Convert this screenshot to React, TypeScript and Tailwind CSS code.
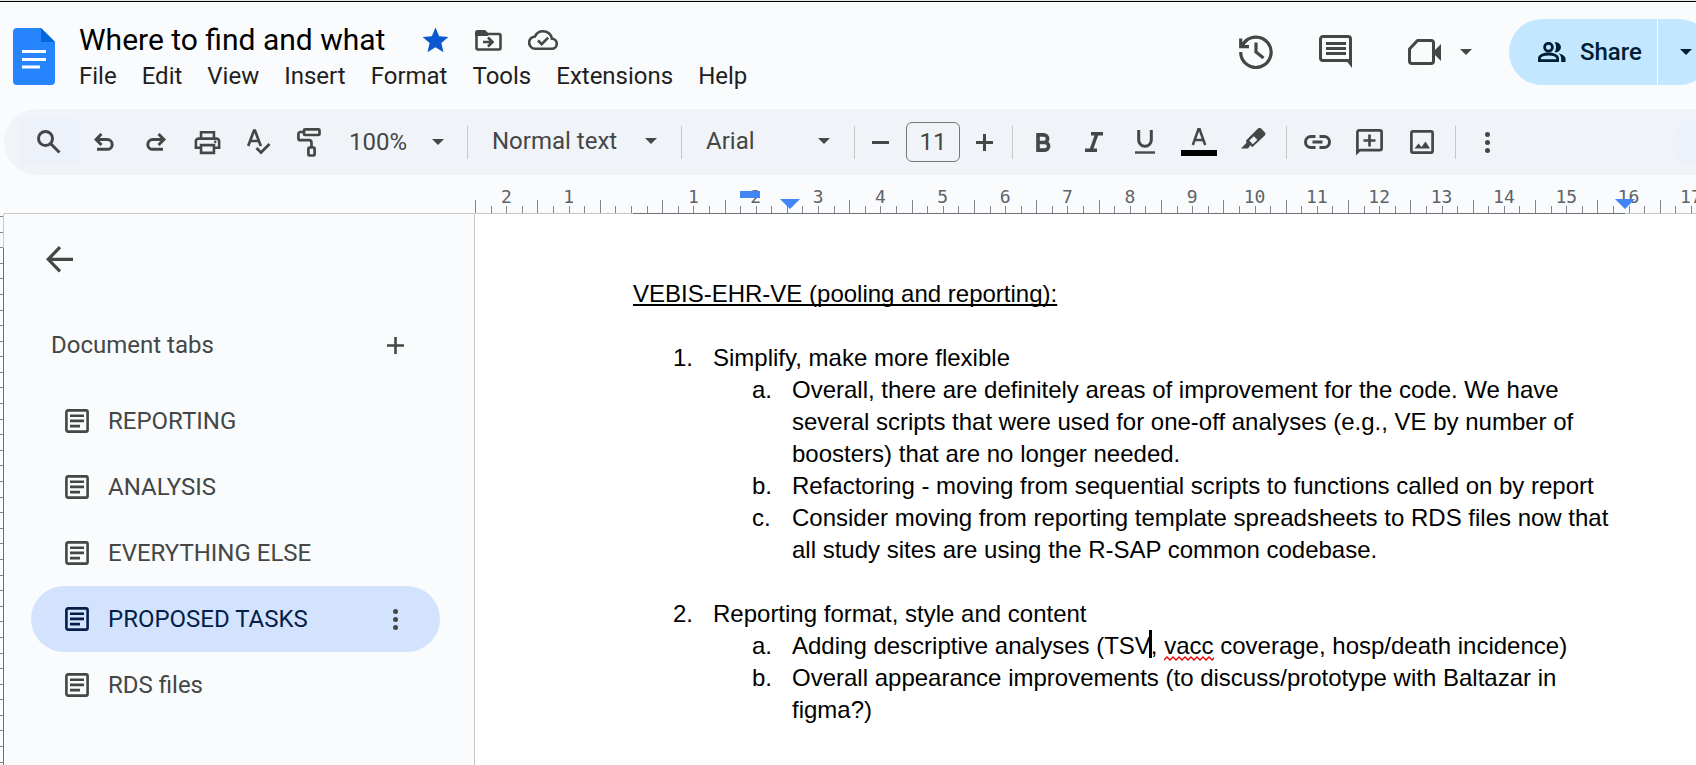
import React from 'react';
import { MdStar, MdOutlinePrint } from 'react-icons/md';

type IconProps = { w: number; h: number; sw?: number; className?: string; children: React.ReactNode };

function Icon({ w, h, sw = 3, className = '', children }: IconProps) {
  return (
    <svg
      width={w}
      height={h}
      viewBox={`0 0 ${w} ${h}`}
      fill="none"
      stroke="currentColor"
      strokeWidth={sw}
      className={`shrink-0 ${className}`}
      aria-hidden="true"
    >
      {children}
    </svg>
  );
}

const Caret = () => (
  <Icon w={12} h={6}>
    <path d="M0 0h12L6 6z" fill="currentColor" stroke="none" />
  </Icon>
);

const DocsLogo = () => (
  <svg width="42" height="57" viewBox="0 0 42 57" className="shrink-0" aria-hidden="true">
    <path d="M4 0h24l14 14v39a4 4 0 0 1-4 4H4a4 4 0 0 1-4-4V4a4 4 0 0 1 4-4z" fill="#2684fc" />
    <path d="M28 0l14 14H28z" fill="#0066da" />
    <path d="M9 22h24v3H9zM9 30h24v3H9zM9 37.500h18v3H9z" fill="#fff" />
  </svg>
);

const FolderMove = () => (
  <Icon w={27} h={21} sw={2.6}>
    <path d="M1.500 3v15a1.500 1.500 0 0 0 1.500 1.500h21a1.500 1.500 0 0 0 1.500-1.500V5.500A1.500 1.500 0 0 0 24 4H13" />
    <path d="M0 6V2.500A2.500 2.500 0 0 1 2.500 0H10l3 2.700V6z" fill="currentColor" stroke="none" />
    <path d="M8 12h9M13 7.500l4.500 4.500-4.500 4.500" />
  </Icon>
);

const CloudDone = () => (
  <Icon w={30} h={20} sw={2.6}>
    <path d="M7.500 18.700h16a5 5 0 0 0 .5-10C23.300 4.300 19.500 1.300 15 1.300c-3.600 0-6.600 2-8 5.200a6.100 6.100 0 0 0 .5 12.200z" />
    <path d="M10 10.500l3.700 3.700 6.500-6.500" />
  </Icon>
);

const History = () => (
  <Icon w={34} h={34} sw={3.2}>
    <path d="M1.700 17A15.200 15.200 0 1 0 4 9.200M1.700 3.500v8.200H10M17 7.500V17l7.500 6" />
    <path d="M3 11.500A15.200 15.200 0 0 1 8 4.700" />
  </Icon>
);

const Comment = () => (
  <Icon w={34} h={34}>
    <path d="M31.500 29V4a2.500 2.500 0 0 0-2.500-2.500H4A2.500 2.500 0 0 0 1.500 4v19A2.500 2.500 0 0 0 4 25.500h24" />
    <path d="M26 24h7v9z" fill="currentColor" stroke="none" />
    <path d="M7 8.500h20M7 13.500h20M7 18.500h20" />
  </Icon>
);

const Camera = () => (
  <Icon w={34} h={27}>
    <path
      d="M9.500 1.500H23A2.500 2.500 0 0 1 25.500 4v18a2.500 2.500 0 0 1-2.500 2.500H4A2.500 2.500 0 0 1 1.500 22V10z"
      strokeLinejoin="round"
    />
    <path d="M25 13l8-8v17l-8-8z" fill="currentColor" stroke="none" />
  </Icon>
);

const People = () => (
  <Icon w={28} h={21} sw={2.8}>
    <circle cx="10.500" cy="5.200" r="3.900" />
    <path d="M1.400 18.600v-2.200c0-3 5-4.400 9.100-4.400s9.100 1.400 9.100 4.400v2.200z" />
    <path
      d="M16.500.3c3.200-.8 6.400 1.600 6.400 4.900s-3.200 5.700-6.400 4.900c2-2.500 2-7.300 0-9.800zM20.500 11.500c4 .8 7 2.600 7 5.300V20h-4.300v-3.200c0-2.200-1-4-2.700-5.300z"
      fill="currentColor"
      stroke="none"
    />
  </Icon>
);

const Search = () => (
  <Icon w={24} h={24}>
    <circle cx="8.500" cy="8.500" r="7" />
    <path d="M13.500 13.500l9 9" />
  </Icon>
);

const Undo = ({ flip = false }: { flip?: boolean }) => (
  <Icon w={20} h={18} className={flip ? '-scale-x-100' : ''}>
    <path d="M7.500 1L2 6.500 7.500 12M2.500 6.500h10.800a4.900 4.900 0 0 1 0 9.800H3" />
  </Icon>
);

const Spell = () => (
  <Icon w={24} h={26} sw={2.7}>
    <path d="M1.200 17L7 1.500h1L13.800 17M3.300 12h8.500" />
    <path d="M9.500 19l4.500 4.500 8.500-8.500" />
  </Icon>
);

const Paint = () => (
  <Icon w={24} h={29} sw={2.7}>
    <rect x="7" y="1.400" width="15.500" height="5.600" rx="1" />
    <path d="M6.500 4H3.400a2 2 0 0 0-2 2v4.200a2 2 0 0 0 2 2H12a2.500 2.500 0 0 1 2.500 2.500V19" />
    <rect x="11.400" y="19.500" width="6.200" height="8" rx="1" />
  </Icon>
);

const Plus = ({ sw = 3 }: { sw?: number }) => (
  <Icon w={17} h={17} sw={sw}>
    <path d="M8.500 0v17M0 8.500h17" />
  </Icon>
);

const Bold = () => (
  <Icon w={15} h={19} sw={3.6}>
    <path d="M2 1.900h5.800a3.800 3.800 0 0 1 0 7.600H2zM2 9.500h6.800a3.800 3.800 0 0 1 0 7.600H2z" />
  </Icon>
);

const Italic = () => (
  <Icon w={18} h={20} sw={3.4}>
    <path d="M6 1.700h12M0 18.300h12M12 1.700L6 18.300" />
  </Icon>
);

const Underline = () => (
  <Icon w={20} h={24}>
    <path d="M3.700 0v10a6.300 6.300 0 0 0 12.600 0V0" />
    <path d="M0 22.500h20" strokeWidth="2.400" />
  </Icon>
);

const TextColor = () => (
  <Icon w={36} h={28} sw={2.5}>
    <path d="M11.800 17L17.500 1h1l5.700 16M13.800 12h8.500" />
    <path d="M0 22h36v6H0z" fill="#000" stroke="none" />
  </Icon>
);

const Highlighter = () => (
  <Icon w={25} h={21}>
    <path
      fillRule="evenodd"
      fill="currentColor"
      stroke="none"
      d="M5 12.500L16.700.8a2.600 2.600 0 0 1 3.700 0L23.500 4a2.600 2.600 0 0 1 0 3.700L11.300 19.300 9.300 17.300 7 20.500H0L5.500 14.800zM8.300 12.600L12.800 8.200 16.400 11.800 11.800 16.200z"
    />
  </Icon>
);

const Link = () => (
  <Icon w={27} h={14}>
    <path d="M11.500 1.500H7a5.500 5.500 0 0 0 0 11h4.500M15.500 1.500H20a5.500 5.500 0 0 1 0 11h-4.500M8.500 7h10" />
  </Icon>
);

const AddComment = () => (
  <Icon w={27} h={27} sw={2.7}>
    <path d="M1.400 24V3a1.600 1.600 0 0 1 1.600-1.600h21A1.600 1.600 0 0 1 25.600 3v16.600a1.600 1.600 0 0 1-1.600 1.600H4" />
    <path d="M0 20h6.500L0 26.500z" fill="currentColor" stroke="none" />
    <path d="M13.500 5.500v12M7.500 11.500h12" />
  </Icon>
);

const Picture = () => (
  <Icon w={24} h={24} sw={2.7}>
    <rect x="1.400" y="1.400" width="21.200" height="21.200" rx="1.600" />
    <path d="M4.500 18.500l4-5 3 3.500 4-5.500 4.500 7z" fill="currentColor" stroke="none" />
  </Icon>
);

const Dots = () => (
  <Icon w={5} h={21}>
    <g fill="currentColor" stroke="none">
      <circle cx="2.500" cy="2.500" r="2.500" />
      <circle cx="2.500" cy="10.500" r="2.500" />
      <circle cx="2.500" cy="18.500" r="2.500" />
    </g>
  </Icon>
);

const TabIcon = () => (
  <Icon w={24} h={24} sw={2.6}>
    <rect x="1.400" y="1.400" width="21.200" height="21.200" rx="1.600" />
    <path d="M5 6.700h14M5 11.900h14M5 17.100h10" />
  </Icon>
);

const BackArrow = () => (
  <Icon w={27} h={27} sw={3.2}>
    <path d="M14 1.200L2.200 13.300 14 25.400M2.500 13.300H27" />
  </Icon>
);

const Divider = () => <span className="h-[33px] w-px shrink-0 bg-[#c7c7c7]" />;

const UNIT = 62.35;
const ZERO = 631;

function HorizontalRuler() {
  const quarters = Array.from({ length: 82 }, (_, i) => i - 10);
  const labels = Array.from({ length: 20 }, (_, i) => i - 2).filter((n) => n !== 0);
  return (
    <svg className="block h-[39px] w-full" aria-hidden="true">
      <path d="M4 38.500H3000" stroke="#c7c7c7" />
      <path d="M633 38.500H1625" stroke="#6f7173" />
      {quarters.map((q) => {
        const x = Math.round(ZERO + (q * UNIT) / 4) + 0.5;
        const half = Math.abs(q) % 4 === 2;
        return <path key={q} d={`M${x} ${half ? 25 : 31}V38`} stroke="#80868b" />;
      })}
      {labels.map((n) => (
        <text
          key={n}
          x={ZERO + n * UNIT}
          y="28"
          textAnchor="middle"
          className="fill-[#5f6368] font-['DejaVu_Sans_Mono',monospace] text-[18px]"
        >
          {Math.abs(n)}
        </text>
      ))}
      <path d="M740 16h20v7h-20zM780 24h20l-10 10zM1615 24h20l-10 10z" fill="#4285f4" />
    </svg>
  );
}

function VerticalRuler() {
  return (
    <svg className="block w-[4px] shrink-0 self-stretch" aria-hidden="true">
      <path d="M3.500 0V34" stroke="#c7c7c7" />
      <path d="M3.500 34V3000" stroke="#6f7173" />
      {Array.from({ length: 60 }, (_, i) => (
        <path key={i} d={`M0 ${Math.round(2 + i * 15.59) + 0.5}H3`} stroke="#80868b" />
      ))}
    </svg>
  );
}

const menus = ['File', 'Edit', 'View', 'Insert', 'Format', 'Tools', 'Extensions', 'Help'];
const tabs = ['REPORTING', 'ANALYSIS', 'EVERYTHING ELSE', 'PROPOSED TASKS', 'RDS files'];
const ACTIVE = 'PROPOSED TASKS';

type Section = { title: string; items: React.ReactNode[] };

const sections: Section[] = [
  {
    title: 'Simplify, make more flexible',
    items: [
      'Overall, there are definitely areas of improvement for the code. We have several scripts that were used for one-off analyses (e.g., VE by number of boosters) that are no longer needed.',
      'Refactoring - moving from sequential scripts to functions called on by report',
      'Consider moving from reporting template spreadsheets to RDS files now that all study sites are using the R-SAP common codebase.',
    ],
  },
  {
    title: 'Reporting format, style and content',
    items: [
      <>
        Adding descriptive analyses (TSV
        <span className="relative">
          <span className="absolute -left-0.5 -top-0.5 h-7 w-[3px] bg-black" />
        </span>
        ,{' '}
        <span className="relative">
          vacc
          <svg className="absolute -bottom-0.5 left-0 h-[5px] w-full" aria-hidden="true">
            <path
              d="M0 4l3-3 3 3 3-3 3 3 3-3 3 3 3-3 3 3 3-3 3 3 3-3 3 3 3-3 3 3 3-3 3 3 3-3"
              fill="none"
              stroke="#e60000"
              strokeWidth="1.300"
            />
          </svg>
        </span>{' '}
        coverage, hosp/death incidence)
      </>,
      'Overall appearance improvements (to discuss/prototype with Baltazar in figma?)',
    ],
  },
];

function Header() {
  return (
    <header className="-mr-4 flex h-[107px] items-start pl-[13px]">
      <a href="#home" aria-label="Docs home" className="mt-[26px]">
        <DocsLogo />
      </a>
      <div className="ml-6 mt-[18px] flex flex-col">
        <div className="flex h-10 items-center text-[#444746]">
          <h1 className="mr-[35px] whitespace-nowrap text-[30px] leading-10 text-black">Where to find and what</h1>
          <button type="button" aria-label="Starred" className="mr-6 text-[#0b57d0]">
            <MdStar size={31} />
          </button>
          <button type="button" aria-label="Move" className="mr-[26px]">
            <FolderMove />
          </button>
          <button type="button" aria-label="Saved to Drive">
            <CloudDone />
          </button>
        </div>
        <nav className="flex gap-[25px] text-[24px] leading-8 text-[#1f1f1f]">
          {menus.map((m) => (
            <button key={m} type="button">
              {m}
            </button>
          ))}
        </nav>
      </div>
      <div className="ml-auto mt-[17px] flex h-[66px] shrink-0 items-center text-[#444746]">
        <button type="button" aria-label="Version history" className="mr-[46px]">
          <History />
        </button>
        <button type="button" aria-label="Comments" className="mr-[55px]">
          <Comment />
        </button>
        <button type="button" aria-label="Join a call" className="mr-[18px]">
          <Camera />
        </button>
        <button type="button" aria-label="Call options" className="mr-[37px]">
          <Caret />
        </button>
        <div className="flex h-[66px] gap-px text-[#001d35]">
          <button
            type="button"
            className="flex w-[148px] items-center gap-3.5 rounded-l-full bg-[#c2e7ff] pl-[29px] text-[24px] font-medium"
          >
            <People />
            Share
          </button>
          <button
            type="button"
            aria-label="Sharing options"
            className="flex w-[54px] items-center rounded-r-full bg-[#c2e7ff] pl-[22px]"
          >
            <Caret />
          </button>
        </div>
      </div>
    </header>
  );
}

function Toolbar() {
  return (
    <div
      role="toolbar"
      aria-label="Formatting"
      className="-mr-16 ml-1 flex h-[66px] items-center rounded-full bg-[#f0f4f9] pl-[15px] text-[24px] text-[#444746]"
    >
      <button
        type="button"
        aria-label="Search menus"
        className="mr-[13px] flex h-12 w-[62px] shrink-0 items-center rounded bg-[#edf1fa] pl-[18px]"
      >
        <Search />
      </button>
      <button type="button" aria-label="Undo" className="mr-8">
        <Undo />
      </button>
      <button type="button" aria-label="Redo" className="mr-[26px]">
        <Undo flip />
      </button>
      <button type="button" aria-label="Print" className="mr-6">
        <MdOutlinePrint size={31} />
      </button>
      <button type="button" aria-label="Spelling check" className="mr-[26px]">
        <Spell />
      </button>
      <button type="button" aria-label="Paint format" className="mr-7">
        <Paint />
      </button>
      <label className="mr-[23px] flex w-[95px] shrink-0 items-center">
        <select aria-label="Zoom" className="w-[83px] appearance-none bg-transparent">
          <option>100%</option>
        </select>
        <Caret />
      </label>
      <Divider />
      <label className="mx-6 flex w-[165px] shrink-0 items-center pb-[3px]">
        <select aria-label="Styles" className="w-[153px] appearance-none bg-transparent">
          <option>Normal text</option>
        </select>
        <Caret />
      </label>
      <Divider />
      <label className="mx-6 flex w-[124px] shrink-0 items-center pb-[3px]">
        <select aria-label="Font" className="w-28 appearance-none bg-transparent">
          <option>Arial</option>
        </select>
        <Caret />
      </label>
      <Divider />
      <button type="button" aria-label="Decrease font size" className="mx-[17px]">
        <Icon w={17} h={3}>
          <path d="M0 1.500h17" />
        </Icon>
      </button>
      <input
        aria-label="Font size"
        defaultValue="11"
        className="h-10 w-[54px] shrink-0 rounded-md border border-[#747775] bg-transparent text-center"
      />
      <button type="button" aria-label="Increase font size" className="ml-4 mr-[19px]">
        <Plus />
      </button>
      <Divider />
      <button type="button" aria-label="Bold" className="ml-[23px] mr-[34px]">
        <Bold />
      </button>
      <button type="button" aria-label="Italic" className="mr-8">
        <Italic />
      </button>
      <button type="button" aria-label="Underline" className="mr-[26px]">
        <Underline />
      </button>
      <button type="button" aria-label="Text color" className="mr-6">
        <TextColor />
      </button>
      <button type="button" aria-label="Highlight color" className="mb-2 mr-5">
        <Highlighter />
      </button>
      <Divider />
      <button type="button" aria-label="Insert link" className="ml-[17px] mr-[25px]">
        <Link />
      </button>
      <button type="button" aria-label="Add comment" className="mr-[27px]">
        <AddComment />
      </button>
      <button type="button" aria-label="Insert image" className="mr-[21px]">
        <Picture />
      </button>
      <Divider />
      <button type="button" aria-label="More" className="ml-[29px]">
        <Dots />
      </button>
      <button
        type="button"
        aria-label="Editing mode"
        className="ml-auto mr-4 h-12 w-[72px] shrink-0 rounded-full bg-[#edf1fa]"
      />
    </div>
  );
}

function Sidebar() {
  return (
    <aside className="w-[471px] shrink-0 border-r border-[#c7c7c7] pl-[27px] pr-[34px] text-[#444746]">
      <button type="button" aria-label="Close tabs" className="ml-[15px] mt-8 block">
        <BackArrow />
      </button>
      <div className="mt-[52px] flex h-10 items-center justify-between pl-5 pr-9">
        <h2 className="text-[24px]">Document tabs</h2>
        <button type="button" aria-label="Add tab">
          <Plus sw={2.6} />
        </button>
      </div>
      <ul className="mt-[23px]">
        {tabs.map((t) => (
          <li
            key={t}
            className={`flex h-[66px] items-center justify-between rounded-full pl-[34px] pr-[42px] ${
              t === ACTIVE ? 'bg-[#d3e3fd]' : ''
            }`}
          >
            <button
              type="button"
              className={`flex items-center gap-[19px] text-[24px] leading-8 ${t === ACTIVE ? 'text-[#041e49]' : ''}`}
            >
              <TabIcon />
              {t}
            </button>
            {t === ACTIVE && (
              <button type="button" aria-label="Tab options">
                <Dots />
              </button>
            )}
          </li>
        ))}
      </ul>
    </aside>
  );
}

function Document() {
  return (
    <main className="min-w-0 grow bg-white pb-8 pl-[158px] pt-16 font-['Liberation_Sans',Arial,sans-serif] text-[24px] leading-8 text-black">
      <div className="max-w-[992px]">
        <p className="underline decoration-2 underline-offset-2 [text-decoration-skip-ink:none]">
          VEBIS-EHR-VE (pooling and reporting):
        </p>
        <ol>
          {sections.map((s, i) => (
            <li key={s.title} className="mt-8">
              <div className="flex pl-10">
                <span className="w-10 shrink-0">{i + 1}.</span>
                <span>{s.title}</span>
              </div>
              <ol>
                {s.items.map((item, j) => (
                  <li key={j} className="flex pl-[119px]">
                    <span className="w-10 shrink-0">{'abc'[j]}.</span>
                    <span>{item}</span>
                  </li>
                ))}
              </ol>
            </li>
          ))}
        </ol>
      </div>
    </main>
  );
}

export default function App() {
  return (
    <div className="flex min-h-screen flex-col overflow-hidden bg-[#f9fbfd] font-['Roboto',sans-serif]">
      <div className="h-0.5 shrink-0 border-b border-black bg-[#e3e8e3]" />
      <Header />
      <Toolbar />
      <HorizontalRuler />
      <div className="flex grow">
        <VerticalRuler />
        <Sidebar />
        <Document />
      </div>
    </div>
  );
}
